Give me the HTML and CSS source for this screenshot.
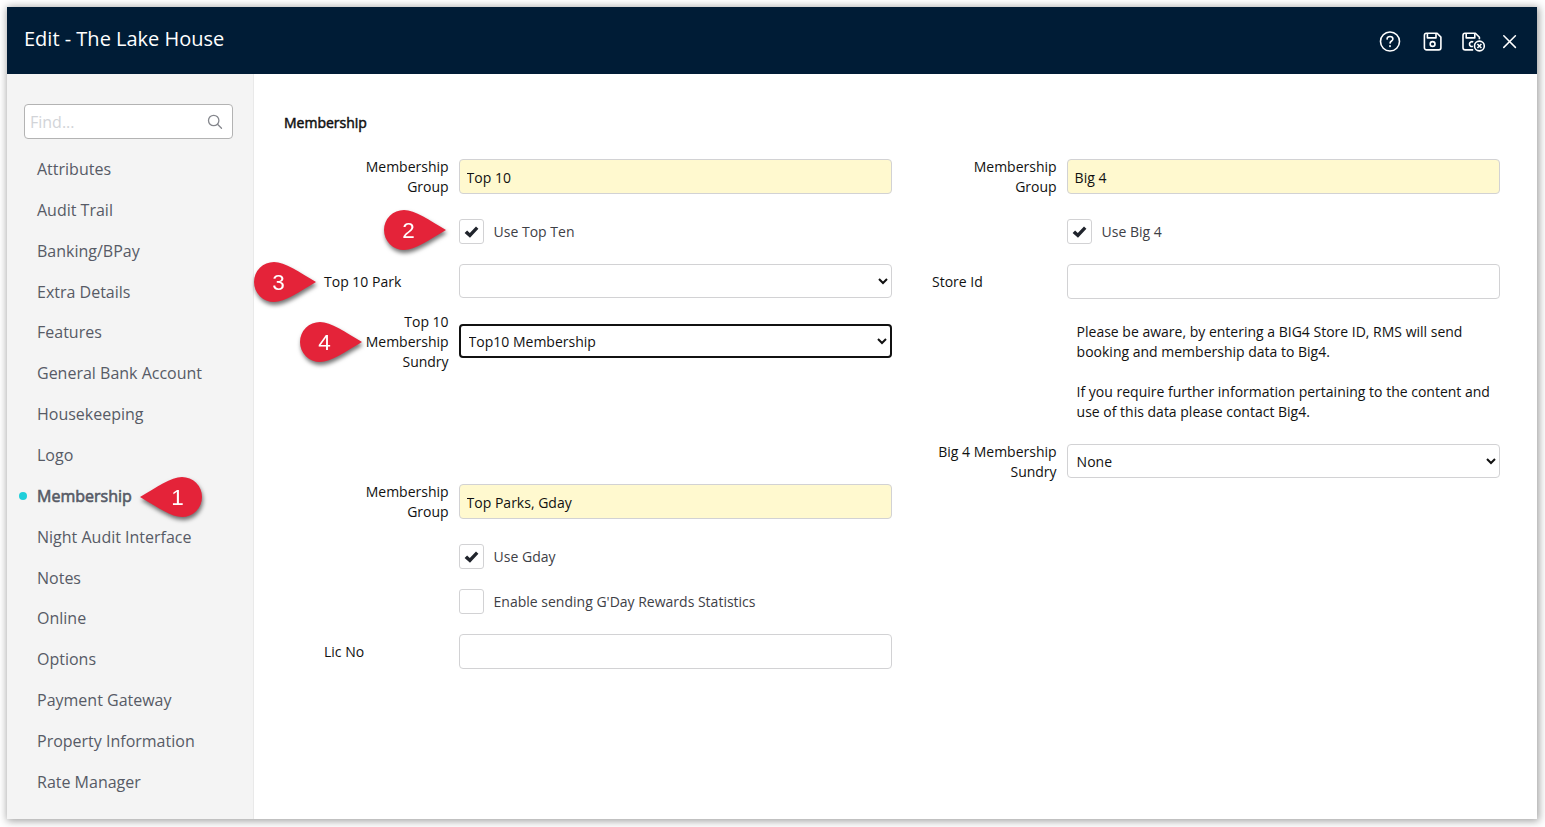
FILE: index.html
```html
<!DOCTYPE html>
<html lang="en">
<head>
<meta charset="utf-8">
<title>Edit - The Lake House</title>
<link rel="stylesheet" href="styles.css">
</head>
<body>
<div class="window">
  <header class="topbar">
    <h1 class="title">Edit - The Lake House</h1>
    <div class="actions">
      <svg class="icon-help" width="22" height="22" viewBox="0 0 22 22" fill="none" stroke="#fff" stroke-width="1.6" stroke-linecap="round" stroke-linejoin="round"><circle cx="11" cy="10.5" r="9.5"/><path d="M8.1 8.1C8.1 6.4 9.3 5.5 11 5.5s2.9 1 2.9 2.5c0 2-2.8 2-2.8 4.1"/><path d="M11 14.9v.4" stroke-width="1.8"/></svg>
      <svg class="icon-save" width="20" height="20" viewBox="0 0 20 20" fill="none" stroke="#fff" stroke-width="1.6" stroke-linejoin="round"><path d="M3.4 1.3h10.7l3.8 3.8v10.6a2.2 2.2 0 0 1-2.2 2.2H3.6a2.2 2.2 0 0 1-2.2-2.2V3.4a2.1 2.1 0 0 1 2-2.1z"/><path d="M4.4 1.5v4.4h8.6V1.5"/><circle cx="9.6" cy="12" r="2.4"/></svg>
      <svg class="icon-save-close" width="24" height="20" viewBox="0 0 24 20" fill="none" stroke="#fff" stroke-width="1.6" stroke-linejoin="round"><path d="M11.2 17.9H3.2A2.2 2.2 0 0 1 1 15.7V3.4a2.1 2.1 0 0 1 2-2.1h10.4l4 4v2"/><path d="M4.2 1.5v4.4h8.6V1.5"/><path d="M11.2 10.1a2.4 2.4 0 1 0-.4 4.2"/><circle cx="17.4" cy="14" r="4.9"/><path d="M15.4 12l4 4M19.4 12l-4 4"/></svg>
      <svg class="icon-close" width="14" height="14" viewBox="0 0 14 14" fill="none" stroke="#fff" stroke-width="1.5" stroke-linecap="round"><path d="M.8.8l11.6 11.6M12.4.8L.8 12.4"/></svg>
    </div>
  </header>
  <div class="body">
    <aside class="sidebar">
      <div class="search">
        <input class="search-input" type="text" placeholder="Find...">
        <svg width="16" height="16" viewBox="0 0 16 16" fill="none" stroke="#85878d" stroke-width="1.3" stroke-linecap="round"><circle cx="6.7" cy="6.5" r="5.2"/><path d="M10.5 10.3l4 4"/></svg>
      </div>
      <nav class="nav">
        <a class="nav-item">Attributes</a>
        <a class="nav-item">Audit Trail</a>
        <a class="nav-item">Banking/BPay</a>
        <a class="nav-item">Extra Details</a>
        <a class="nav-item">Features</a>
        <a class="nav-item">General Bank Account</a>
        <a class="nav-item">Housekeeping</a>
        <a class="nav-item">Logo</a>
        <a class="nav-item active">Membership</a>
        <a class="nav-item">Night Audit Interface</a>
        <a class="nav-item">Notes</a>
        <a class="nav-item">Online</a>
        <a class="nav-item">Options</a>
        <a class="nav-item">Payment Gateway</a>
        <a class="nav-item">Property Information</a>
        <a class="nav-item">Rate Manager</a>
      </nav>
    </aside>
    <main class="content">
      <h2 class="section-title">Membership</h2>
      <div class="columns">
        <div class="column">
          <div class="row group"><label class="label">Membership<br>Group</label><input class="field required" value="Top 10"></div>
          <div class="row check"><span class="box"><svg width="16" height="14" viewBox="0 0 16 14"><path d="M.6 8l2.5-2.5 2.7 2.5L12 1.4l2.4 2.3L6 12.7z" fill="#20242c"/></svg></span><span class="check-label">Use Top Ten</span></div>
          <div class="row single"><label class="label">Top 10 Park</label><select class="field select"><option></option></select></div>
          <div class="row triple"><label class="label">Top 10<br>Membership<br>Sundry</label><select class="field select focused"><option>Top10 Membership</option></select></div>
          <div class="row group second"><label class="label">Membership<br>Group</label><input class="field required" value="Top Parks, Gday"></div>
          <div class="row check"><span class="box"><svg width="16" height="14" viewBox="0 0 16 14"><path d="M.6 8l2.5-2.5 2.7 2.5L12 1.4l2.4 2.3L6 12.7z" fill="#20242c"/></svg></span><span class="check-label">Use Gday</span></div>
          <div class="row check stacked"><span class="box"></span><span class="check-label">Enable sending G'Day Rewards Statistics</span></div>
          <div class="row single"><label class="label">Lic No</label><input class="field"></div>
        </div>
        <div class="column">
          <div class="row group"><label class="label">Membership<br>Group</label><input class="field required" value="Big 4"></div>
          <div class="row check"><span class="box"><svg width="16" height="14" viewBox="0 0 16 14"><path d="M.6 8l2.5-2.5 2.7 2.5L12 1.4l2.4 2.3L6 12.7z" fill="#20242c"/></svg></span><span class="check-label">Use Big 4</span></div>
          <div class="row single"><label class="label">Store Id</label><input class="field"></div>
          <div class="note">
            <p>Please be aware, by entering a BIG4 Store ID, RMS will send<br>booking and membership data to Big4.</p>
            <p>If you require further information pertaining to the content and<br>use of this data please contact Big4.</p>
          </div>
          <div class="row group sundry"><label class="label">Big 4 Membership<br>Sundry</label><select class="field select"><option>None</option></select></div>
        </div>
      </div>
    </main>
  </div>
  <svg class="pin pin-1" viewBox="0 0 62 40"><path d="M0 20C17 10 31 0 42 0a20 20 0 0 1 0 40C31 40 17 30 0 20z"/><text x="37.5" y="28">1</text></svg>
  <svg class="pin pin-2" viewBox="0 0 62 40"><path d="M62 20C45 10 31 0 20 0a20 20 0 0 0 0 40C31 40 45 30 62 20z"/><text x="24.5" y="28">2</text></svg>
  <svg class="pin pin-3" viewBox="0 0 62 40"><path d="M62 20C45 10 31 0 20 0a20 20 0 0 0 0 40C31 40 45 30 62 20z"/><text x="24.5" y="28">3</text></svg>
  <svg class="pin pin-4" viewBox="0 0 62 40"><path d="M62 20C45 10 31 0 20 0a20 20 0 0 0 0 40C31 40 45 30 62 20z"/><text x="24.5" y="28">4</text></svg>
</div>
</body>
</html>
```

FILE: styles.css
```css
* { box-sizing: border-box; }
body { margin: 0; padding: 7px 8px 8px 7px; height: 827px; overflow: hidden; background: #fff; font: 14px/20px "Open Sans", "Noto Sans", sans-serif; color: #111; }
h1, h2, p { margin: 0; }
.window { position: relative; width: 1530px; height: 812px; display: flex; flex-direction: column; background: #fff; box-shadow: 1px 1px 8px 1px rgba(0, 0, 0, .38); }

.topbar { height: 67px; flex: none; display: flex; justify-content: space-between; align-items: center; padding: 0 20px 0 17px; background: #001c36; }
.title { font-size: 20px; font-weight: 400; line-height: 28px; color: #fff; padding-bottom: 4px; }
.actions { display: flex; align-items: center; padding-top: 2px; }
.actions svg { display: block; }
.icon-save { margin-left: 22px; }
.icon-save-close { margin-left: 19px; }
.icon-close { margin-left: 17px; }

.body { flex: 1; display: flex; min-height: 0; }
.sidebar { width: 247px; flex: none; padding: 30px 20px 0 17px; background: #f4f4f4; border-right: 1px solid #e9e9e9; }
.search { width: 209px; height: 35px; display: flex; align-items: center; padding: 0 9px 0 5px; background: #fff; border: 1px solid #b3b3b3; border-radius: 4px; }
.search-input { flex: 1; min-width: 0; height: 31px; padding: 0; border: 0; outline: 0; background: none; font: 16px "Open Sans", sans-serif; }
.search-input::placeholder { color: #d2d4d8; }
.nav { padding: 10px 0 0 13px; display: flex; flex-direction: column; }
.nav-item { position: relative; height: 40.87px; line-height: 40.87px; font-size: 16px; color: #575b66; white-space: nowrap; }
.nav-item.active { -webkit-text-stroke: .6px #575b66; }
.nav-item.active::before { content: ""; position: absolute; left: -18px; top: 16px; width: 8px; height: 8px; border-radius: 50%; background: #1fcfda; }

.content { flex: 1; padding: 39px 0 0 30px; }
.section-title { font-size: 14px; font-weight: 400; line-height: 20px; -webkit-text-stroke: .5px #111; }
.columns { display: flex; gap: 40px; padding: 24px 0 0 40px; }
.column { width: 568px; }
.row { display: flex; align-items: flex-start; gap: 10px; }
.label { width: 125px; padding-right: .4px; text-align: right; }
.field { width: 433px; height: 35px; padding: 1px 6.6px 0; border: 1px solid #d2d2d4; border-radius: 4px; background: #fff; font: 14px "Open Sans", sans-serif; color: #111; outline: 0; }
.required { background: #fff9cf; }
.select { height: 34px; padding: 1px 0 0 4.6px; }
.focused { border: 2px solid #111; padding-left: 3.6px; padding-right: 0; }
.group { height: 40px; }
.group .field { margin-top: 2px; }
.second { margin-top: 110px; }
.check { height: 25px; margin: 22px 0 20px 135px; gap: 9.6px; align-items: center; }
.check.stacked { margin-top: 20px; }
.box { width: 25px; height: 25px; display: flex; align-items: center; justify-content: center; padding-top: 1px; border: 1px solid #d2d2d4; border-radius: 3px; }
.check-label { color: #3e4046; }
.single { height: 35px; }
.single .label { text-align: left; padding-top: 8px; }
.triple { height: 60px; margin-top: 13px; }
.triple .field { margin-top: 12px; }
.note { margin: 23px 0 20px 144.6px; white-space: nowrap; }
.note p + p { margin-top: 20px; }

.pin { position: absolute; width: 62px; height: 40px; overflow: visible; filter: drop-shadow(1px 3px 2px rgba(0, 0, 0, .55)); }
.pin path { fill: #e42339; }
.pin text { fill: #fff; font: 22.5px "Liberation Sans", Arial, sans-serif; text-anchor: middle; }
.pin-1 { left: 133px; top: 470px; }
.pin-2 { left: 377px; top: 203px; }
.pin-3 { left: 247px; top: 255px; }
.pin-4 { left: 293px; top: 315px; }
```
